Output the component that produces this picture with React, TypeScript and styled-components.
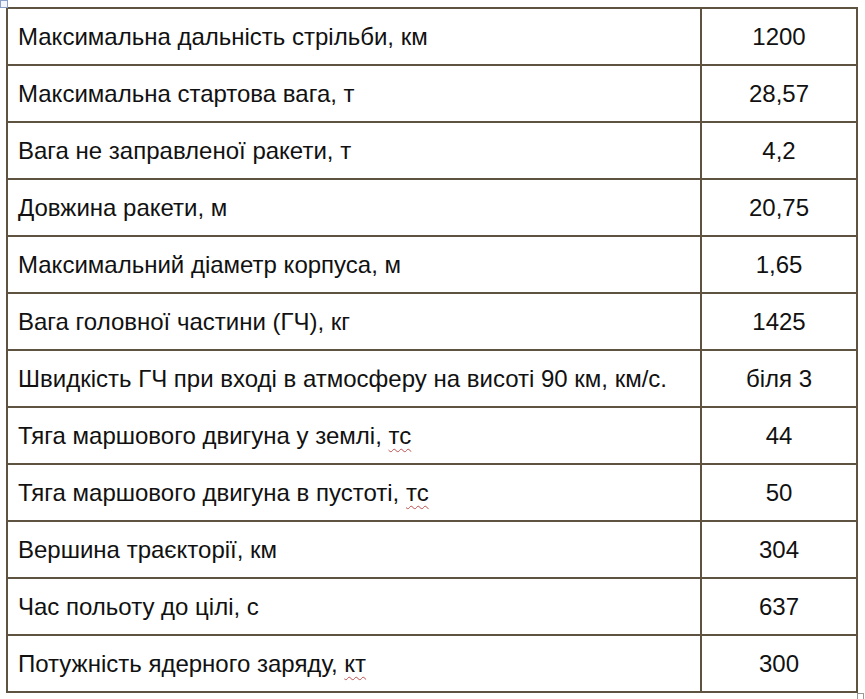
import React, { FC } from 'react';
import styled, { createGlobalStyle } from 'styled-components';

const GlobalStyle = createGlobalStyle`
  html, body {
    margin: 0;
    padding: 0;
    background: #ffffff;
  }
`;

type Row = { label: string; value: string; mark?: string };

const rows: Row[] = [
  { label: 'Максимальна дальність стрільби, км', value: '1200' },
  { label: 'Максимальна стартова вага, т', value: '28,57' },
  { label: 'Вага не заправленої ракети, т', value: '4,2' },
  { label: 'Довжина ракети, м', value: '20,75' },
  { label: 'Максимальний діаметр корпуса, м', value: '1,65' },
  { label: 'Вага головної частини (ГЧ), кг', value: '1425' },
  { label: 'Швидкість ГЧ при вході в атмосферу на висоті 90 км, км/с.', value: 'біля 3' },
  { label: 'Тяга маршового двигуна у землі, ', mark: 'тс', value: '44' },
  { label: 'Тяга маршового двигуна в пустоті, ', mark: 'тс', value: '50' },
  { label: 'Вершина траєкторії, км', value: '304' },
  { label: 'Час польоту до цілі, с', value: '637' },
  { label: 'Потужність ядерного заряду, ', mark: 'кт', value: '300' },
];

const App: FC = () => {
  return (
    <Page>
      <GlobalStyle />
      <MoveHandle />
      <Table>
        <tbody>
          {rows.map((row) => (
            <tr key={row.label + row.value}>
              <LabelCell>
                {row.label}
                {row.mark && <Squiggle>{row.mark}</Squiggle>}
              </LabelCell>
              <ValueCell>{row.value}</ValueCell>
            </tr>
          ))}
        </tbody>
      </Table>
      <ResizeHandle />
    </Page>
  );
};

const Page = styled.div`
  position: relative;
  width: 865px;
  height: 699px;
  padding: 7px 0 0 6px;
  box-sizing: border-box;
  font-family: 'Liberation Sans', Arial, sans-serif;
  color: #111111;
`;

const Table = styled.table`
  border-collapse: collapse;
  width: 852px;
  table-layout: fixed;
`;

const Cell = styled.td`
  border: 2px solid #5e5240;
  height: 55px;
  padding: 0 10px;
  font-size: 24px;
  line-height: 28px;
  vertical-align: middle;
  white-space: nowrap;
`;

const LabelCell = styled(Cell)`
  width: 672px;
`;

const ValueCell = styled(Cell)`
  text-align: center;
`;

const Squiggle = styled.span`
  text-decoration: underline wavy #c0504d;
  text-decoration-thickness: 1px;
  text-underline-offset: 4px;
`;

const MoveHandle = styled.div`
  position: absolute;
  left: 0;
  top: 0;
  width: 6px;
  height: 6px;
  border: 1px solid #8aa0c8;
  background: #f2f5fb;
`;

const ResizeHandle = styled.div`
  position: absolute;
  left: 857px;
  top: 693px;
  width: 5px;
  height: 5px;
  border: 1px solid #9a9a9a;
  background: #ffffff;
`;

export default App;
